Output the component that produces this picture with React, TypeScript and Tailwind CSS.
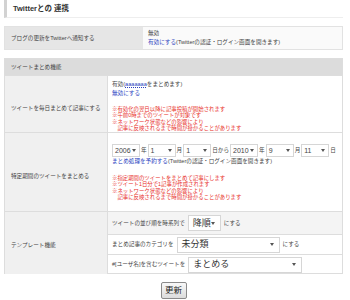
import React from 'react';

const FONT = "font-['Liberation_Sans','Noto_Sans_CJK_JP',sans-serif]";

// 小さいセレクト（日付用）
const DateSelect = ({ value }: { value: string }) => (
  <span className="inline-flex h-[13px] w-[28px] shrink-0 items-center justify-between whitespace-nowrap border border-[#d6d6d6] bg-white pl-[2px] pr-[3px] text-[7px] leading-none text-[#444]">
    <span>{value}</span>
    <span className="h-0 w-0 border-l-[2px] border-r-[2px] border-t-[3px] border-l-transparent border-r-transparent border-t-[#555]" />
  </span>
);

// テンプレート機能のセレクト
const BigSelect = ({ value, width }: { value: string; width: string }) => (
  <span
    className={`inline-flex h-[16px] shrink-0 items-center justify-between whitespace-nowrap border border-[#d6d6d6] bg-white pl-[4px] pr-[5px] text-[9px] leading-none text-[#333] ${width}`}
  >
    <span>{value}</span>
    <span className="h-0 w-0 border-l-[2px] border-r-[2px] border-t-[3px] border-l-transparent border-r-transparent border-t-[#555]" />
  </span>
);

const Notes = ({ lines }: { lines: string[] }) => (
  <div className="text-[5.4px] leading-[6.4px] text-[#e8302a]">
    {lines.map((l) => (
      <div key={l} className="whitespace-nowrap">{l}</div>
    ))}
  </div>
);

const App = () => {
  return (
    <div className={`h-[300px] w-[350px] overflow-hidden bg-white text-[#444] ${FONT}`}>
      {/* 見出し */}
      <div className="ml-1 mr-[7px] flex h-[18px] items-center border-b border-l-[3px] border-b-[#eeeeee] border-l-[#d2d2d2] pl-[6px] text-[7.5px] font-bold text-[#333]">
        Twitterとの 連携
      </div>

      {/* 通知設定 */}
      <div className="ml-1 mt-[8px] grid h-[24px] w-[339px] grid-cols-[138px_1fr] border border-[#e2e2e2] text-[5.6px]">
        <div className="flex items-center bg-[#e6e6e6] pl-[6px]">ブログの更新をTwitterへ通知する</div>
        <div className="bg-[#fafafa] pl-[5px] pt-[2px] leading-[9px]">
          <div>無効</div>
          <div>
            <span className="text-[#2b3fbf]">有効にする</span>(Twitterの認証・ログイン画面を開きます)
          </div>
        </div>
      </div>

      {/* ツイートまとめ機能 */}
      <div className="ml-1 mt-[8px] w-[339px] border border-[#dddddd] text-[5.6px]">
        <div className="flex h-[16px] items-center bg-[#dcdcdc] pl-[6px]">ツイートまとめ機能</div>

        <div className="grid h-[57px] grid-cols-[103px_1fr] border-t border-[#dddddd]">
          <div className="flex items-center border-r border-[#dddddd] bg-[#f0f0f0] pl-[6px] pt-[9px]">
            ツイートを毎日まとめて記事にする
          </div>
          <div className="pl-[4px] pt-[4px]">
            <div className="leading-[9px]">
              有効(<span className="text-[#2b3fbf] underline decoration-dotted">aaaaaaa</span>をまとめます)
            </div>
            <div className="leading-[9px] text-[#2b3fbf]">無効にする</div>
            <div className="mt-[8px]">
              <Notes
                lines={[
                  '※有効化の翌日以降に記事投稿が開始されます',
                  '※午前0時までのツイートが対象です',
                  '※ネットワーク状態などの影響により',
                  '　記事に反映されるまで時間が掛かることがあります',
                ]}
              />
            </div>
          </div>
        </div>

        <div className="grid h-[79px] grid-cols-[103px_1fr] border-t border-[#dddddd]">
          <div className="flex items-center border-r border-[#dddddd] bg-[#f0f0f0] pl-[6px] pt-[9px]">
            特定期間のツイートをまとめる
          </div>
          <div className="pl-[4px] pt-[11px]">
            <div className="flex items-center gap-[1px] whitespace-nowrap">
              <DateSelect value="2006" />
              <span>年</span>
              <DateSelect value="1" />
              <span>月</span>
              <DateSelect value="1" />
              <span>日から</span>
              <DateSelect value="2010" />
              <span>年</span>
              <DateSelect value="9" />
              <span>月</span>
              <DateSelect value="11" />
              <span>日</span>
            </div>
            <div className="leading-[9px]">
              <span className="text-[#2b3fbf]">まとめ処理を予約する</span>(Twitterの認証・ログイン画面を開きます)
            </div>
            <div className="mt-[9px]">
              <Notes
                lines={[
                  '※指定期間のツイートをまとめて記事にします',
                  '※ツイート1日分で1記事が作成されます',
                  '※ネットワーク状態などの影響により',
                  '　記事に反映されるまで時間が掛かることがあります',
                ]}
              />
            </div>
          </div>
        </div>

        <div className="grid h-[62px] grid-cols-[103px_1fr] border-t border-[#dddddd]">
          <div className="flex items-center border-r border-[#dddddd] bg-[#f0f0f0] pl-[6px] pt-[4px]">
            テンプレート機能
          </div>
          <div className="grid grid-rows-[22px_20px_20px]">
            <div className="flex items-center gap-[3px] bg-[#f4f4f4] pl-[4px]">
              <span>ツイートの並び順を時系列で</span>
              <BigSelect value="降順" width="w-[33px]" />
              <span>にする</span>
            </div>
            <div className="flex items-center gap-[3px] border-t border-[#dddddd] pl-[4px]">
              <span>まとめ記事のカテゴリを</span>
              <BigSelect value="未分類" width="w-[103px]" />
              <span>にする</span>
            </div>
            <div className="flex items-center gap-[3px] border-t border-[#dddddd] pl-[4px]">
              <span>#[ユーザ名]を含むツイートを</span>
              <BigSelect value="まとめる" width="w-[114px]" />
            </div>
          </div>
        </div>
      </div>

      <div className="ml-1 mt-[8px] flex w-[339px] justify-center">
        <button className="h-[17px] w-[26px] rounded-[2px] border border-[#8a8a8a] bg-gradient-to-b from-[#f8f8f8] to-[#dcdcdc] text-[8.5px] leading-none text-[#222]">
          更新
        </button>
      </div>
    </div>
  );
};

export default App;
